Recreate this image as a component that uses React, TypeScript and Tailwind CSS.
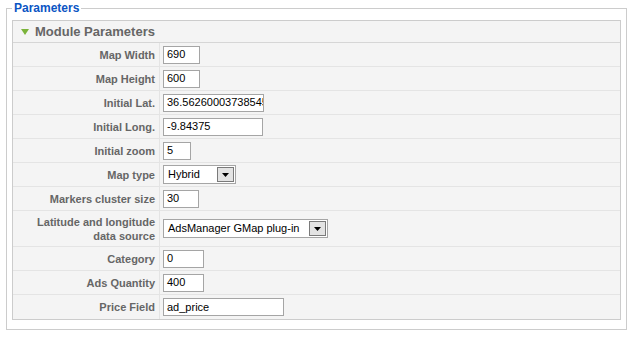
const rows: { label: string[]; kind: 'input' | 'select'; value: string; w: string }[] = [
  { label: ['Map Width'], kind: 'input', value: '690', w: 'w-[37px]' },
  { label: ['Map Height'], kind: 'input', value: '600', w: 'w-[37px]' },
  { label: ['Initial Lat.'], kind: 'input', value: '36.56260003738545', w: 'w-[101px]' },
  { label: ['Initial Long.'], kind: 'input', value: '-9.84375', w: 'w-[100px]' },
  { label: ['Initial zoom'], kind: 'input', value: '5', w: 'w-[28px]' },
  { label: ['Map type'], kind: 'select', value: 'Hybrid', w: 'w-[73px]' },
  { label: ['Markers cluster size'], kind: 'input', value: '30', w: 'w-[36px]' },
  { label: ['Latitude and longitude', 'data source'], kind: 'select', value: 'AdsManager GMap plug-in', w: 'w-[165px]' },
  { label: ['Category'], kind: 'input', value: '0', w: 'w-[41px]' },
  { label: ['Ads Quantity'], kind: 'input', value: '400', w: 'w-[41px]' },
  { label: ['Price Field'], kind: 'input', value: 'ad_price', w: 'w-[121px]' },
];

const Select = ({ value, w }: { value: string; w: string }) => (
  <div className={`${w} h-[19px] border border-[#a5a5a5] bg-white flex items-center justify-between`}>
    <span className="pl-[4px] text-[11px] text-black leading-none">{value}</span>
    <span className="mr-[1px] w-[17px] h-[15px] bg-[#e3e3e3] border border-[#7a7a7a] flex items-center justify-center">
      <svg width="7" height="4" viewBox="0 0 7 4">
        <path d="M0 0h7L3.5 4z" fill="#000" />
      </svg>
    </span>
  </div>
);

export default function App() {
  return (
    <div className="w-[636px] h-[337px] bg-white pt-[1px] font-['Liberation_Sans',Arial,sans-serif]">
      <fieldset className="ml-[6px] w-[621px] border border-[#cccccc] px-[5px] pt-[5px] pb-[9px]">
        <legend className="px-[2px] text-[12px] leading-[14px] font-bold text-[#0b55c4]">Parameters</legend>
        <div className="border border-[#cccccc] bg-[#f4f4f4]">
          <div className="h-[22px] border-b border-[#d6d6d6] flex items-center pl-[8px] gap-[6px]">
            <svg width="8" height="6" viewBox="0 0 8 6">
              <path d="M0 0h8L4 6z" fill="#7bb33a" />
            </svg>
            <span className="text-[13px] font-bold text-[#666666] leading-none">Module Parameters</span>
          </div>
          {rows.map((r, i) => (
            <div
              key={i}
              className={`grid grid-cols-[147px_1fr] ${r.label.length > 1 ? 'h-[36px]' : 'h-[24px]'} ${
                i < rows.length - 1 ? 'border-b border-[#e4e4e4]' : ''
              }`}
            >
              <div className="border-r border-[#e4e4e4] flex flex-col items-end justify-center pr-[4px] text-[11px] leading-[14px] font-bold text-[#666666] text-right">
                {r.label.map((l) => (
                  <span key={l}>{l}</span>
                ))}
              </div>
              <div className="flex items-center pl-[3px]">
                {r.kind === 'input' ? (
                  <div
                    className={`${r.w} h-[18px] border border-[#a5a5a5] bg-white flex items-center pl-[3px] overflow-hidden whitespace-nowrap text-[11px] text-black leading-none`}
                  >
                    {r.value}
                  </div>
                ) : (
                  <Select value={r.value} w={r.w} />
                )}
              </div>
            </div>
          ))}
        </div>
      </fieldset>
    </div>
  );
}
